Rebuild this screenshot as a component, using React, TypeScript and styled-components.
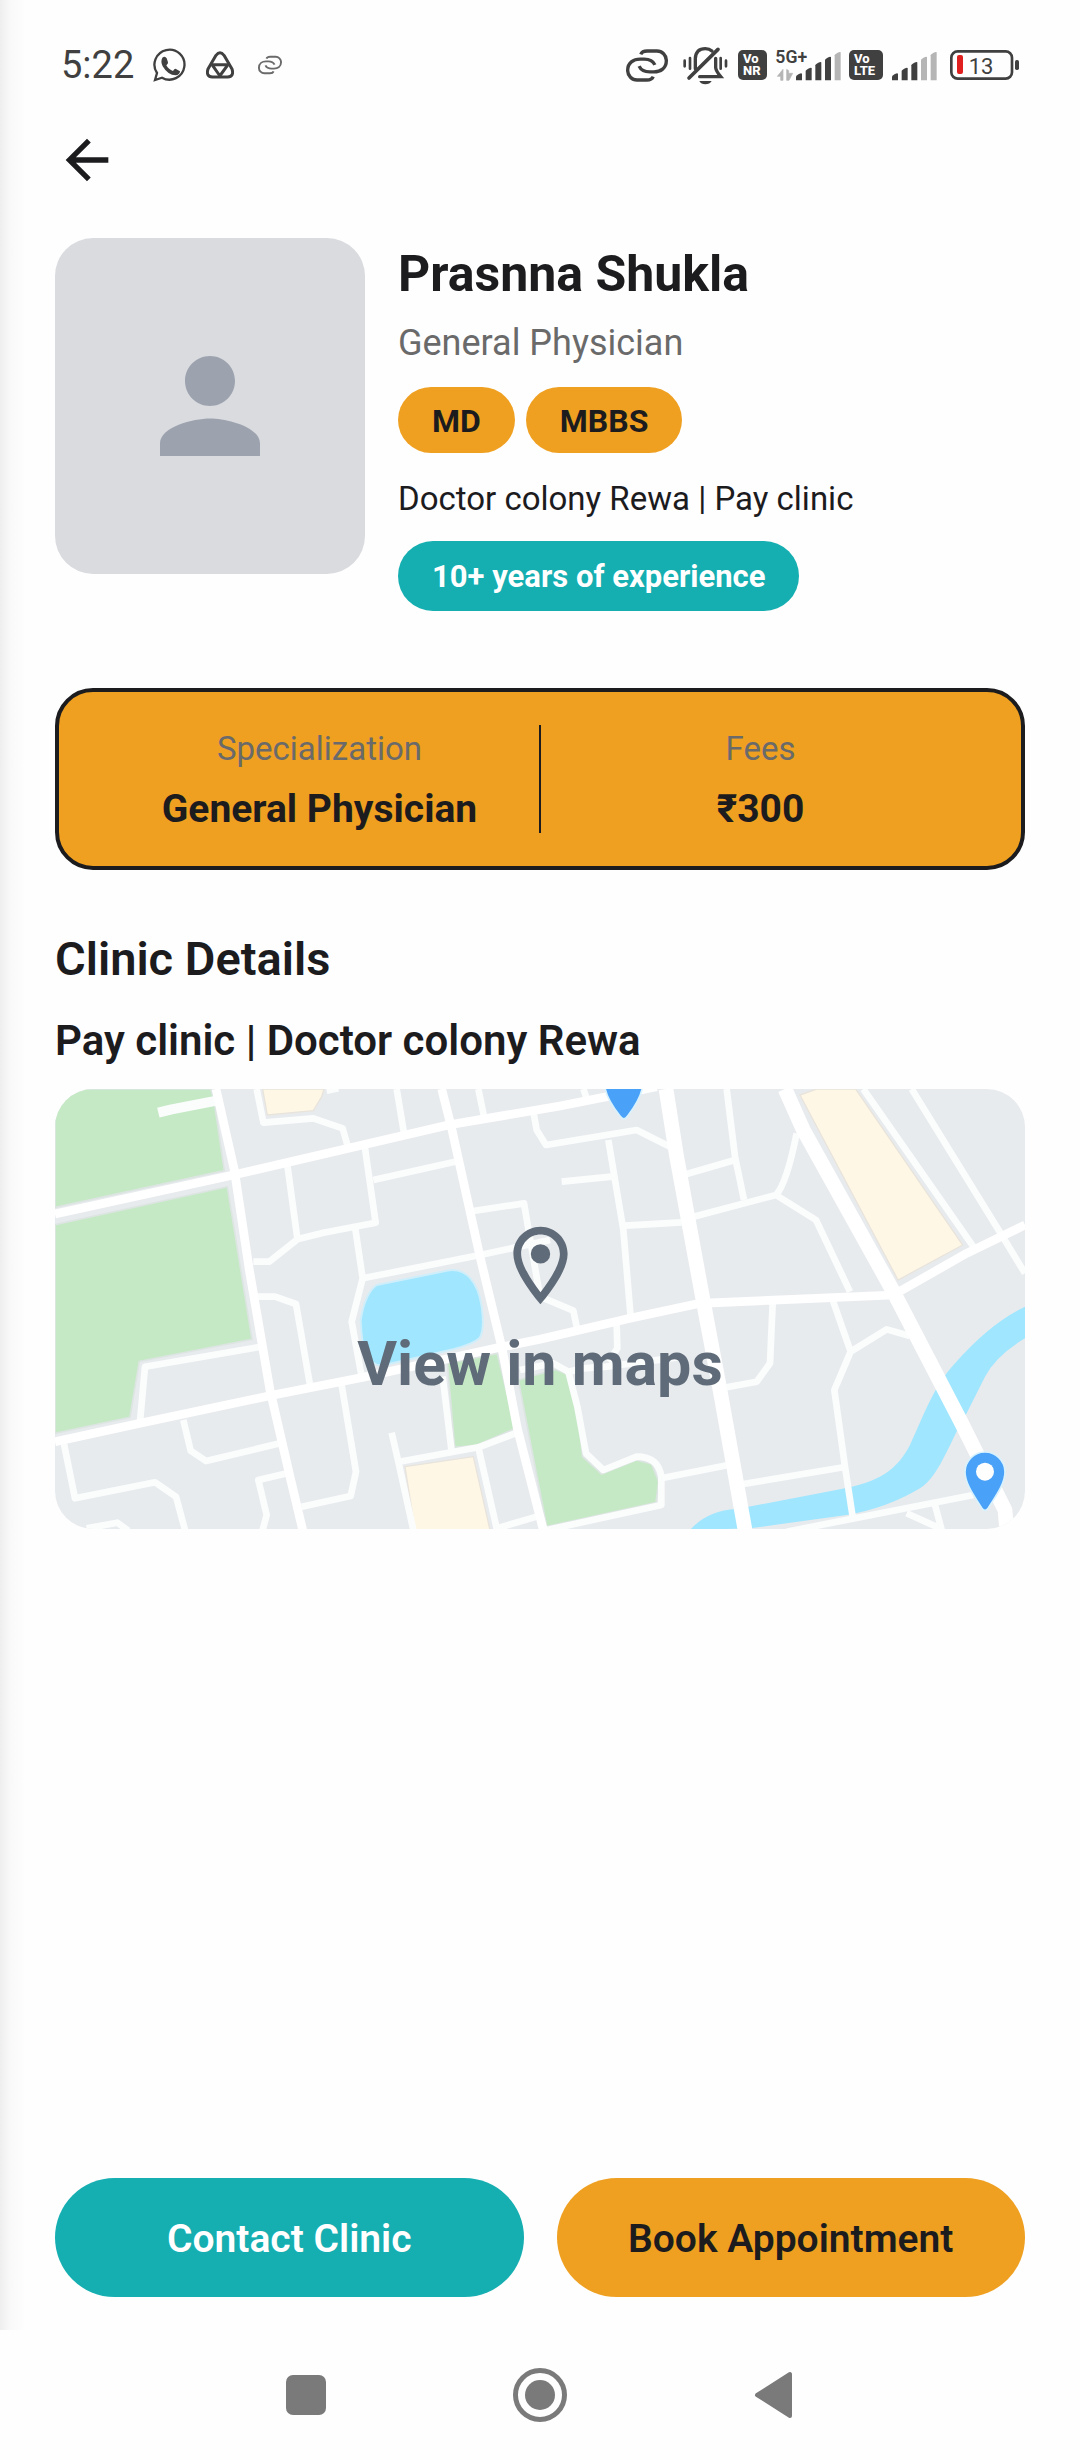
import styled, { createGlobalStyle } from "styled-components";
import { MdArrowBack, MdPerson } from "react-icons/md";

const GlobalStyle = createGlobalStyle`
  :root {
    --color-bg: #fefefe;
    --color-text: #1c1b1e;
    --color-muted: #6a6a6a;
    --color-status: #404040;
    --color-orange: #efa021;
    --color-teal: #15aeb1;
    --color-map-label: #5f6b78;
  }

  *,
  *::before,
  *::after {
    box-sizing: border-box;
    margin: 0;
  }

  body {
    background-color: var(--color-bg);
    color: var(--color-text);
    font-family: Roboto, "Noto Sans", sans-serif;
  }

  svg {
    display: block;
    flex-shrink: 0;
  }
`;

const doctor = {
  name: "Prasnna Shukla",
  speciality: "General Physician",
  degrees: ["MD", "MBBS"],
  clinic: "Pay clinic",
  address: "Doctor colony Rewa",
  experience: "10+ years of experience",
  fees: "₹300",
};

interface LinkIconProps {
  width: number;
  height: number;
}

function LinkIcon({ width, height }: LinkIconProps) {
  const loop =
    "M121 99Q125 89 140 89H168A28 28 0 0 1 197 118C197 140 180 151 160 151H148C130 151 120 143 116 134";

  return (
    <svg width={width} height={height} viewBox="77 83 125 98">
      <g fill="none" stroke="currentColor" strokeWidth="10">
        <path d={loop} />
        <path d={loop} transform="rotate(180 139.5 132)" />
      </g>
    </svg>
  );
}

function WhatsappIcon() {
  return (
    <svg width="34" height="36" viewBox="443 79 102 108">
      <path
        d="M449 178L455 157A45 45 0 1 1 470 171Z"
        fill="none"
        stroke="currentColor"
        strokeWidth="7"
      />
      <path
        d="M471 111q8-7 13 2l4 12q1 4-5 9q7 13 20 17q5-8 9-6l12 7q-1 11-13 12q-23 0-39-27q-7-15-1-26z"
        fill="currentColor"
      />
    </svg>
  );
}

function TrefoilIcon() {
  return (
    <svg width="28" height="28" viewBox="595 90 84 84">
      <g
        fill="none"
        stroke="currentColor"
        strokeWidth="9"
        strokeLinejoin="round"
      >
        <path d="M625 103Q637 88 649 103L673 144Q680 166 660 168H614Q594 166 601 144Z" />
        <path d="M611 131H663M613 131L639 168M661 131L634 168" />
      </g>
    </svg>
  );
}

function BellOffIcon() {
  return (
    <svg width="47" height="39" viewBox="248 75 141 117">
      <g
        fill="none"
        stroke="currentColor"
        strokeWidth="10"
        strokeLinecap="round"
      >
        <path d="M285 143V112Q287 83 315 83Q327 83 335 90" />
        <path d="M346 112V140Q347 150 361 167H298" />
        <path d="M266 171L353 85" strokeWidth="11" />
      </g>
      <path d="M297 180H334Q328 190 315 190T297 180Z" fill="currentColor" />
      <path
        d="M253 119V136M269 111V143M361 111V143M377 119V136"
        stroke="currentColor"
        strokeWidth="8"
        strokeLinecap="round"
      />
    </svg>
  );
}

interface SignalBarsProps {
  x: number;
  active: number;
}

function SignalBars({ x, active }: SignalBarsProps) {
  return (
    <>
      {[156, 139, 122, 106, 92].map((top, i) => (
        <path
          key={top}
          d={`M${x + i * 29} 177V${top + 10}Q${x + 1 + i * 29} ${top + 5} ${
            x + 15 + i * 29
          } ${top}L${x + 18 + i * 29} ${top + 1}V177Z`}
          fill={i < active ? "#404040" : "#b5b5b5"}
        />
      ))}
    </>
  );
}

function NetworkIcon() {
  return (
    <svg width="66" height="48" viewBox="525 59 198 144">
      <text x="526" y="125" fontSize="53" fontWeight="600" fill="#404040">
        5G+
      </text>
      <path
        d="M549 144V177H542V165H532ZM560 177V144L566 148V156H578L567 177Z"
        fill="#b5b5b5"
        stroke="#b5b5b5"
        strokeWidth="2"
      />
      <SignalBars x={588} active={4} />
    </svg>
  );
}

function SignalIcon() {
  return (
    <svg width="46" height="34" viewBox="873 80 138 102">
      <SignalBars x={876} active={3} />
    </svg>
  );
}

function BatteryIcon() {
  return (
    <svg width="74" height="32" viewBox="1035 84 222 96">
      <rect
        x="1054"
        y="91"
        width="182"
        height="82"
        rx="19"
        fill="none"
        stroke="#404040"
        strokeWidth="8"
      />
      <rect x="1071" y="102" width="18" height="57" rx="6" fill="#e01f1f" />
      <rect x="1245" y="117" width="12" height="30" rx="5" fill="#404040" />
      <text x="1106" y="158" fontSize="66" fill="#404040">
        13
      </text>
    </svg>
  );
}

function PlaceIcon() {
  return (
    <svg width="93" height="93" viewBox="0 0 24 24" fill="currentColor">
      <path d="M12 2C8.13 2 5 5.13 5 9c0 5.25 7 13 7 13s7-7.75 7-13c0-3.87-3.13-7-7-7zM7 9c0-2.76 2.24-5 5-5s5 2.24 5 5c0 2.88-2.88 7.19-5 9.88C9.92 16.21 7 11.85 7 9z" />
      <circle cx="12" cy="9" r="2.5" />
    </svg>
  );
}

// One map unit is a third of a pixel at the card's natural width.
function MapPicture() {
  return (
    <MapCanvas viewBox="45 27 2910 1320" preserveAspectRatio="xMidYMid slice">
      <rect x="45" y="27" width="2910" height="1320" fill="#e8ebee" />

      <g fill="#c5e9c5" stroke="#dde5e2" strokeWidth="5">
        <path d="M45 27H512L522 60L553 272L45 382Z" />
        <path d="M45 434L562 320L636 778L298 844L270 1012L45 1060Z" />
        <path d="M1222 850L1372 820L1426 1045L1310 1096L1244 1102Z" />
        <path d="M1435 900L1545 868L1588 885L1612 990L1628 1130L1685 1182L1790 1140L1835 1152L1856 1205L1848 1268L1520 1340Z" />
      </g>

      <g fill="#fff7e6" stroke="#e8e4dc" strokeWidth="4">
        <path d="M668 27H852L845 50L820 92L682 105Z" />
        <path d="M1095 1160L1300 1130L1350 1350H1125Z" />
        <path d="M2280 45L2330 27H2447L2768 495L2574 600Z" />
      </g>

      <g fill="#a0e6ff">
        <path
          d="M1010 615L1220 572C1280 560 1315 610 1325 680Q1335 750 1318 775Q1300 792 1240 808L1030 856C975 860 965 800 962 720Q975 640 1010 615Z"
          stroke="#cfeefa"
          strokeWidth="6"
        />
        <path d="M1950 1350Q2000 1292 2090 1287L2400 1228C2520 1205 2570 1170 2610 1095C2650 1010 2680 920 2745 850Q2850 730 2955 680V775Q2870 825 2835 890L2780 1000C2740 1060 2700 1190 2640 1225Q2540 1285 2420 1305L2130 1345Z" />
      </g>

      <g fill="none" stroke="#fbfdfd" strokeLinejoin="round" strokeWidth="20">
        <path d="M355 98L395 88L530 62" strokeWidth="30" />
        <path d="M650 27L670 128L820 115L908 145L925 205" />
        <path d="M860 32L895 25M1070 27L1092 160M1315 27L1332 110" />
        <path d="M742 255L772 475M640 545H688L772 478L850 458L1007 428L975 205" />
        <path d="M1000 300L1245 245M945 440L968 595L935 725L965 890" />
        <path d="M968 595L1320 525L1530 480M1300 393L1452 370L1500 650" />
        <path d="M1500 650L1600 692L1612 750M650 650H705L768 672L810 915" />
        <path d="M300 1025L315 860L665 800" />
        <path d="M430 1020L452 1112L498 1143L720 1090" />
        <path d="M72 1092L105 1255L345 1207L408 1250L435 1350" />
        <path d="M140 1345L232 1328L265 1352" />
        <path d="M748 1178L655 1200L680 1305L668 1350" />
        <path d="M905 915L948 1175L932 1248L785 1280" />
        <path d="M1055 1058L1075 1145L1120 1350M1078 1145L1315 1102L1440 1055" />
        <path d="M1208 890L1235 1115M1315 1102L1370 1345L1490 1310" />
        <path d="M1480 95L1490 150L1518 195L1790 150L1890 200" />
        <path d="M1705 180L1750 450L1772 712M1565 305L1715 290M1755 437L1925 427" />
        <path d="M1630 27L1640 55M2060 27L2085 230L2112 360M1940 282L2085 240" />
        <path d="M1960 410L2208 345Q2240 310 2270 160M2208 345L2328 420L2430 635" />
        <path d="M2470 27L2800 500M2615 27L2885 465L2955 580" />
        <path d="M1730 735L1732 805L1705 845M2198 670L2190 850L2150 905L2060 922" />
        <path d="M2378 660L2432 815L2540 748L2610 768M2432 815L2383 930L2415 1160L2438 1310" />
        <path d="M1440 870L1540 850L1585 875L1630 865L1700 860L1930 830" />
        <path d="M1585 875L1612 980L1638 1120L1690 1170L1790 1130Q1855 1130 1864 1190V1275L1520 1350" />
        <path d="M1864 1195L2065 1155M2110 1212L2410 1162" />
        <path d="M2240 1355L2800 1245M2600 1300L2700 1345M2685 1275L2705 1350" />
      </g>

      <g fill="none" stroke="#ffffff" strokeLinejoin="round" strokeWidth="26">
        <path d="M528 27L583 270L628 570L690 930L750 1190L788 1350" />
        <path d="M45 402L580 285L1225 135L1560 78L1850 20" />
        <path d="M45 1085L300 1030L700 945L970 892L1380 802L1500 778L1770 715L1980 670L2560 645L2780 520L2955 435" />
        <path d="M1205 27L1235 145L1320 530L1385 800L1432 1045L1510 1350" />
        <path
          d="M1878 27L1910 230L1990 665L2040 930L2115 1350"
          strokeWidth="44"
        />
        <path
          d="M2235 27L2290 150L2560 635L2760 1020L2895 1290L2900 1350"
          strokeWidth="44"
        />
      </g>

      <g stroke="#d8f2fd" strokeWidth="5">
        <path
          d="M1695 24H1807Q1800 60 1763 108Q1752 125 1740 108Q1702 60 1695 24Z"
          fill="#4aa1f8"
        />
        <path
          d="M2835 1116A60 60 0 0 1 2895 1176C2895 1215 2860 1258 2845 1284Q2835 1298 2825 1284C2810 1258 2775 1215 2775 1176A60 60 0 0 1 2835 1116Z"
          fill="#4aa1f8"
        />
        <circle cx="2835" cy="1175" r="27" fill="#ffffff" stroke="none" />
      </g>
    </MapCanvas>
  );
}

export default function App() {
  return (
    <>
      <GlobalStyle />
      <Screen>
        <Page>
          <StatusBar>
            <StatusLeft>
              <Clock>5:22</Clock>
              <WhatsappIcon />
              <TrefoilIcon />
              <FaintIcon>
                <LinkIcon width={24} height={20} />
              </FaintIcon>
            </StatusLeft>
            <StatusRight>
              <LinkSlot>
                <LinkIcon width={42} height={33} />
              </LinkSlot>
              <BellOffIcon />
              <NetworkTag $width={29}>
                <span>Vo</span>
                <span>NR</span>
              </NetworkTag>
              <NetworkIcon />
              <NetworkTag $width={34}>
                <span>Vo</span>
                <span>LTE</span>
              </NetworkTag>
              <SignalIcon />
              <BatteryIcon />
            </StatusRight>
          </StatusBar>

          <BackButton type="button" aria-label="Back">
            <MdArrowBack size={64} />
          </BackButton>

          <Profile>
            <Avatar>
              <MdPerson size={150} />
            </Avatar>
            <ProfileInfo>
              <Name>{doctor.name}</Name>
              <Speciality>{doctor.speciality}</Speciality>
              <Degrees>
                {doctor.degrees.map((degree) => (
                  <Degree key={degree}>{degree}</Degree>
                ))}
              </Degrees>
              <Address>
                {doctor.address} | {doctor.clinic}
              </Address>
              <Experience>{doctor.experience}</Experience>
            </ProfileInfo>
          </Profile>

          <Summary>
            <SummaryItem>
              <SummaryLabel>Specialization</SummaryLabel>
              <SummaryValue>{doctor.speciality}</SummaryValue>
            </SummaryItem>
            <Divider />
            <SummaryItem>
              <SummaryLabel>Fees</SummaryLabel>
              <SummaryValue>{doctor.fees}</SummaryValue>
            </SummaryItem>
          </Summary>

          <SectionTitle>Clinic Details</SectionTitle>
          <ClinicName>
            {doctor.clinic} | {doctor.address}
          </ClinicName>
          <MapLink href="#maps">
            <MapPicture />
            <MapLabel>
              <PlaceIcon />
              View in maps
            </MapLabel>
          </MapLink>

          <Actions>
            <ActionButton type="button" $variant="contact">
              Contact Clinic
            </ActionButton>
            <ActionButton type="button" $variant="book">
              Book Appointment
            </ActionButton>
          </Actions>
        </Page>

        <NavBar>
          <NavButton type="button" aria-label="Recent apps">
            <svg width="54" height="54" viewBox="0 0 54 54">
              <rect x="7" y="7" width="40" height="40" rx="7" fill="#7a7a7a" />
            </svg>
          </NavButton>
          <NavButton type="button" aria-label="Home">
            <svg width="54" height="54" viewBox="0 0 54 54">
              <circle
                cx="27"
                cy="27"
                r="24.5"
                fill="none"
                stroke="#7a7a7a"
                strokeWidth="5"
              />
              <circle cx="27" cy="27" r="15" fill="#7a7a7a" />
            </svg>
          </NavButton>
          <NavButton type="button" aria-label="Back">
            <svg width="54" height="54" viewBox="0 0 54 54">
              <path
                d="M43 6V48L10 27Z"
                fill="#7a7a7a"
                stroke="#7a7a7a"
                strokeWidth="4"
                strokeLinejoin="round"
              />
            </svg>
          </NavButton>
        </NavBar>
      </Screen>
    </>
  );
}

const Screen = styled.div`
  display: flex;
  flex-direction: column;
  min-height: 100vh;
`;

const Page = styled.main`
  display: flex;
  flex-direction: column;
  flex: 1;
  padding: 40px 55px 33px;
  background: linear-gradient(to right, #eeeeee, #f9f9f9 10px, #fefefe 26px);
`;

const StatusBar = styled.div`
  display: flex;
  align-items: center;
  justify-content: space-between;
  height: 50px;
  padding: 0 6px;
  color: var(--color-status);
`;

const StatusLeft = styled.div`
  display: flex;
  align-items: center;
  gap: 19px;
`;

const Clock = styled.time`
  font-size: 38px;
  line-height: 50px;
`;

const FaintIcon = styled.span`
  padding-left: 5px;
  color: #6a6a6a;
`;

const StatusRight = styled.div`
  display: flex;
  align-items: center;
  gap: 8px;
`;

const LinkSlot = styled.span`
  padding-right: 7px;
`;

const NetworkTag = styled.span<{ $width: number }>`
  display: flex;
  flex-direction: column;
  justify-content: center;
  width: ${({ $width }) => $width}px;
  height: 30px;
  padding-left: 5px;
  border-radius: 5px;
  background-color: var(--color-status);
  color: #ffffff;
  font-size: 13px;
  font-weight: 800;
  line-height: 12px;
`;

const BackButton = styled.button`
  align-self: flex-start;
  margin-top: 38px;
  padding: 0;
  border: none;
  background: none;
  color: var(--color-text);
`;

const Profile = styled.section`
  display: flex;
  gap: 33px;
  margin-top: 46px;
`;

const Avatar = styled.div`
  display: flex;
  align-items: center;
  justify-content: center;
  flex-shrink: 0;
  width: 310px;
  height: 336px;
  border-radius: 38px;
  background-color: #dadbdf;
  color: #9ca3af;
`;

const ProfileInfo = styled.div`
  display: flex;
  flex-direction: column;
  align-items: flex-start;
  padding-top: 6px;
`;

const Name = styled.h1`
  font-size: 50px;
  font-weight: 700;
  line-height: 60px;
`;

const Speciality = styled.p`
  margin-top: 15px;
  color: var(--color-muted);
  font-size: 36px;
  line-height: 48px;
`;

const Degrees = styled.div`
  display: flex;
  gap: 11px;
  margin-top: 20px;
`;

const Degree = styled.span`
  padding: 2px 34px 0;
  border-radius: 33px;
  background-color: var(--color-orange);
  font-size: 32px;
  font-weight: 700;
  line-height: 64px;
`;

const Address = styled.p`
  margin-top: 24px;
  font-size: 33px;
  line-height: 44px;
`;

const Experience = styled.p`
  margin-top: 20px;
  padding: 2px 34px 0;
  border-radius: 35px;
  background-color: var(--color-teal);
  color: #ffffff;
  font-size: 31px;
  font-weight: 700;
  line-height: 68px;
`;

const Summary = styled.section`
  display: flex;
  margin-top: 77px;
  padding: 33px 41px;
  border: 4px solid var(--color-text);
  border-radius: 38px;
  background-color: var(--color-orange);
`;

const SummaryItem = styled.div`
  display: flex;
  flex: 1;
  flex-direction: column;
  align-items: center;
  gap: 12px;
`;

const Divider = styled.div`
  width: 2px;
  background-color: var(--color-text);
`;

const SummaryLabel = styled.p`
  color: var(--color-muted);
  font-size: 33px;
  line-height: 48px;
`;

const SummaryValue = styled.p`
  font-size: 39px;
  font-weight: 700;
  line-height: 48px;
`;

const SectionTitle = styled.h2`
  margin-top: 61px;
  font-size: 47px;
  font-weight: 600;
  line-height: 56px;
`;

const ClinicName = styled.h3`
  margin-top: 30px;
  font-size: 42px;
  font-weight: 600;
  line-height: 48px;
`;

const MapLink = styled.a`
  display: grid;
  height: 440px;
  margin-top: 24px;
  border-radius: 38px;
  overflow: hidden;
  color: var(--color-map-label);
  text-decoration: none;
`;

const MapCanvas = styled.svg`
  grid-area: 1 / 1;
  width: 100%;
  height: 440px;
`;

const MapLabel = styled.span`
  grid-area: 1 / 1;
  display: flex;
  flex-direction: column;
  align-items: center;
  justify-content: center;
  gap: 16px;
  font-size: 61px;
  font-weight: 700;
  line-height: 72px;
`;

const Actions = styled.div`
  display: flex;
  gap: 33px;
  margin-top: auto;
  padding-top: 33px;
`;

const ActionButton = styled.button<{ $variant: "contact" | "book" }>`
  flex: 1;
  height: 119px;
  padding: 2px 0 0;
  border: none;
  border-radius: 60px;
  background-color: ${({ $variant }) =>
    $variant === "contact" ? "var(--color-teal)" : "var(--color-orange)"};
  color: ${({ $variant }) =>
    $variant === "contact" ? "#ffffff" : "var(--color-text)"};
  font-family: inherit;
  font-size: 39px;
  font-weight: 600;
`;

const NavBar = styled.nav`
  display: flex;
  align-items: center;
  justify-content: center;
  gap: 180px;
  height: 130px;
`;

const NavButton = styled.button`
  padding: 0;
  border: none;
  background: none;
`;
